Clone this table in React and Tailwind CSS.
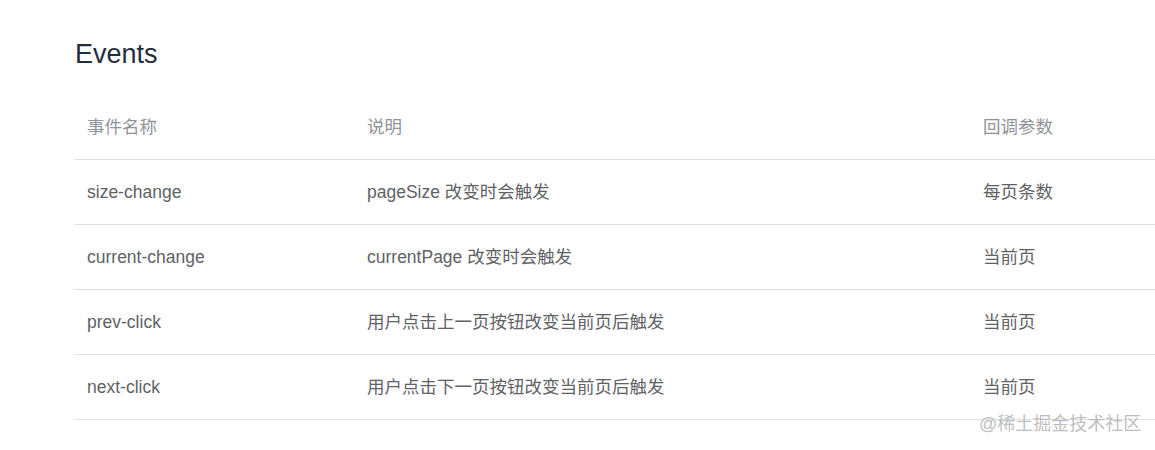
import React from "react";

const rows = [
  ["size-change", "pageSize 改变时会触发", "每页条数"],
  ["current-change", "currentPage 改变时会触发", "当前页"],
  ["prev-click", "用户点击上一页按钮改变当前页后触发", "当前页"],
  ["next-click", "用户点击下一页按钮改变当前页后触发", "当前页"],
];

const font = { fontFamily: '"Liberation Sans", Arial, "Noto Sans CJK SC", sans-serif' };

export default function App() {
  return (
    <div className="relative w-[1155px] h-[450px] bg-white overflow-hidden pl-[74px]" style={font}>
      <h3 className="pt-[37px] text-[27px] leading-[34px] text-[#1f2f3d] pl-px">Events</h3>
      <table className="mt-[23px] w-[1100px] border-collapse text-[17.5px]">
        <thead>
          <tr className="h-[65px] border-b border-[#dcdfe6]">
            <th className="w-[280px] text-left font-normal text-[#909399] pl-[13px] pt-[2px]">事件名称</th>
            <th className="w-[616px] text-left font-normal text-[#909399] pl-[13px] pt-[2px]">说明</th>
            <th className="text-left font-normal text-[#909399] pl-[13px] pt-[2px]">回调参数</th>
          </tr>
        </thead>
        <tbody>
          {rows.map((r, i) => (
            <tr key={i} className="h-[65px] border-b border-[#dcdfe6]">
              <td className="text-[#606266] pl-[13px] pt-[2px]">{r[0]}</td>
              <td className="text-[#606266] pl-[13px] pt-[2px]">{r[1]}</td>
              <td className="text-[#606266] pl-[13px] pt-[2px]">{r[2]}</td>
            </tr>
          ))}
        </tbody>
      </table>
      <div className="absolute left-[979px] top-[411px] text-[18px] leading-[26px] text-[#b4b6ba]/90">@稀土掘金技术社区</div>
    </div>
  );
}
